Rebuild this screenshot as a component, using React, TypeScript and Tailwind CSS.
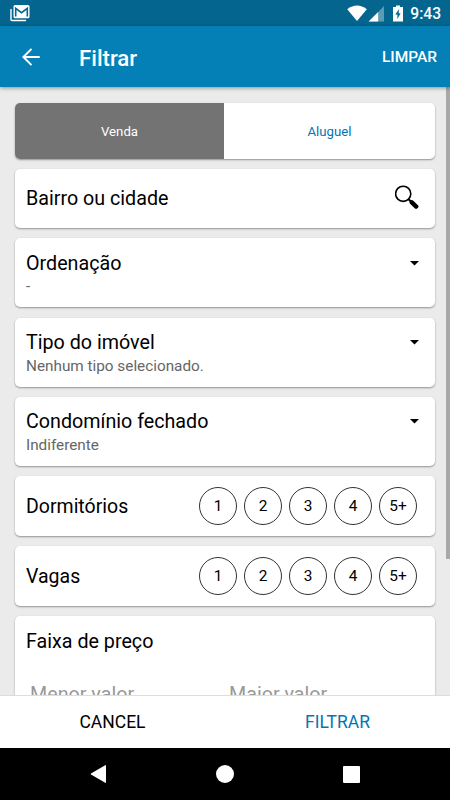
import React, { ReactNode } from "react";

function StatusBar() {
  return (
    <div className="flex h-[26px] shrink-0 items-center bg-[#04668f] pl-[10px] pr-[9px] text-white">
      <svg width="20" height="17" viewBox="0 0 20 17" className="mt-px">
        <path d="M1 4v10.5a1 1 0 0 0 1 1h14" fill="none" stroke="currentColor" strokeWidth="1.4" />
        <rect x="3.5" y="0" width="16" height="13.3" rx="1.5" fill="currentColor" />
        <path d="M5.7 11.5V3.4L11.5 7.7L17.3 3.4V11.5" fill="none" stroke="#04668f" strokeWidth="1.6" />
      </svg>
      <svg width="58" height="17" viewBox="0 0 58 17" className="ml-auto mr-[6px]">
        <path d="M1.2 4.3Q11 -3.2 20.8 4.3L11 16Z" fill="currentColor" />
        <path d="M38 1V16.5H23Z" fill="currentColor" opacity=".35" />
        <path d="M32.2 7V16.5H22.6Z" fill="currentColor" />
        <path d="M50 2V.5h4V2H57v14.5H47V2Z" fill="currentColor" />
        <path d="M53.2 4L49.2 9.6h2.2v4.4L54.6 8.2h-2Z" fill="#04668f" />
      </svg>
      <span className="pt-[3px] text-[15.6px] font-medium leading-none">9:43</span>
    </div>
  );
}

function AppBar() {
  return (
    <header className="relative z-10 flex h-[61px] shrink-0 items-center bg-[#0580b7] pl-[22px] pr-[13px] text-white shadow-[0_1px_4px_rgba(0,0,0,.4)]">
      <svg width="18" height="18" viewBox="0 0 18 18" fill="none" stroke="currentColor" strokeWidth="2">
        <path d="M17.7 9H1.5M9.5 .9L1.4 9l8.1 8.1" />
      </svg>
      <h1 className="ml-[39px] pt-[3px] text-[22.2px] font-medium leading-none">Filtrar</h1>
      <button className="ml-auto pt-[2px] text-[15.5px] font-medium leading-none">LIMPAR</button>
    </header>
  );
}

function Card({ className, children }: { className: string; children: ReactNode }) {
  return (
    <section className={"shrink-0 rounded-[5px] bg-white shadow-[0_1px_2px_rgba(0,0,0,.38)] " + className}>
      {children}
    </section>
  );
}

function SelectCard({ title, value }: { title: string; value: string }) {
  return (
    <Card className="h-[69px] px-[11px] pt-[13px]">
      <div className="flex h-[24px] items-center justify-between pr-[5px]">
        <h2 className="pt-px text-[19.7px] leading-6">{title}</h2>
        <svg width="9" height="5" viewBox="0 0 9 5">
          <path d="M0 0h9L4.5 4.5Z" />
        </svg>
      </div>
      <p className="text-[15.3px] leading-[23px] text-[#666]">{value}</p>
    </Card>
  );
}

function CountCard({ title }: { title: string }) {
  return (
    <Card className="flex h-[60px] items-center justify-between pl-[11px] pr-[18px]">
      <h2 className="pt-[2px] text-[19.5px] leading-6">{title}</h2>
      <div className="flex gap-[7px]">
        {["1", "2", "3", "4", "5+"].map((n) => (
          <button key={n} className="flex size-[38px] items-center justify-center rounded-full border border-[#333] pt-px text-[15.4px]">
            {n}
          </button>
        ))}
      </div>
    </Card>
  );
}

export default function App() {
  return (
    <div className="flex h-[800px] w-[450px] flex-col overflow-hidden bg-[#ebebeb] font-[Roboto,sans-serif] text-black">
      <StatusBar />
      <AppBar />
      <main className="flex min-h-0 flex-1 justify-between overflow-hidden pl-[15px]">
        <div className="flex w-[420px] flex-col gap-[10.2px] pt-[16px]">
          <Card className="flex h-[56px] overflow-hidden text-[13.2px]">
            <button className="w-[209px] bg-[#737373] pt-[2px] text-white">Venda</button>
            <button className="flex-1 pt-[2px] text-[#0575b0]">Aluguel</button>
          </Card>
          <Card className="flex h-[59px] items-center justify-between pl-[11px] pr-[16px]">
            <h2 className="pt-px text-[19.7px] leading-6">Bairro ou cidade</h2>
            <svg width="24" height="24" viewBox="0 0 24 24" fill="none" stroke="black" className="-mt-[3px]">
              <circle cx="8.2" cy="8.8" r="7.6" strokeWidth="1.6" />
              <path d="M13.6 14.2l2.5 2.5" strokeWidth="2" />
              <path d="M16.8 17.4l4.4 4.2" strokeWidth="4.4" strokeLinecap="round" />
            </svg>
          </Card>
          <SelectCard title="Ordenação" value="-" />
          <SelectCard title="Tipo do imóvel" value="Nenhum tipo selecionado." />
          <SelectCard title="Condomínio fechado" value="Indiferente" />
          <CountCard title="Dormitórios" />
          <CountCard title="Vagas" />
          <Card className="h-[140px] px-[11px] pt-[14px]">
            <h2 className="text-[19.7px] leading-6">Faixa de preço</h2>
            <div className="mt-[29px] flex pl-[4px] text-[19.7px] leading-6 text-[#999]">
              <span className="w-[199px]">Menor valor</span>
              <span>Maior valor</span>
            </div>
          </Card>
        </div>
        <div className="h-[472px] w-[4px] bg-[#a8a8a8]" />
      </main>
      <footer className="flex h-[53px] shrink-0 border-t border-[#ddd] bg-white text-[17.5px]">
        <button className="flex-1">CANCEL</button>
        <button className="flex-1 text-[#0575b0]">FILTRAR</button>
      </footer>
      <nav className="flex h-[52px] shrink-0 items-center justify-between bg-black pl-[90px] pr-[90px]">
        <svg width="17" height="20" viewBox="0 0 17 20" fill="white">
          <path d="M15.2 1.2q.8-.4.8.5v16.6q0 .9-.8.5L1 10.6q-.8-.6 0-1.1Z" />
        </svg>
        <span className="size-[18px] rounded-full bg-white" />
        <span className="size-[17px] rounded-[1px] bg-white" />
      </nav>
    </div>
  );
}
